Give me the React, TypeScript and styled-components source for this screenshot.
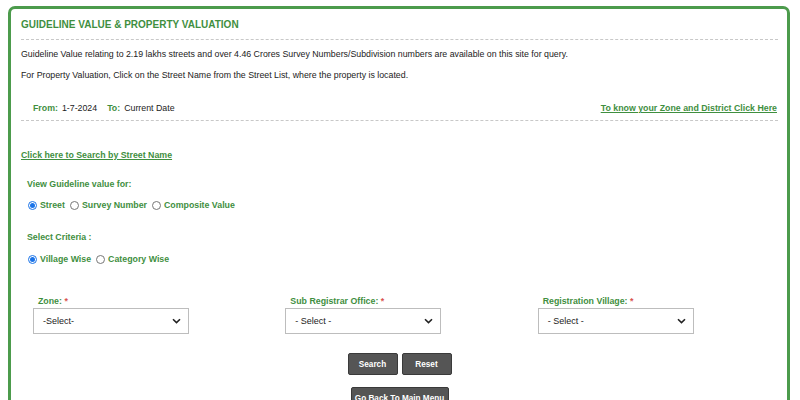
import React from "react";
import styled, { createGlobalStyle } from "styled-components";

const GlobalStyle = createGlobalStyle`
  html, body { margin: 0; padding: 0; background: #fff; }
  body { font-family: "Liberation Sans", Arial, sans-serif; color: #222; }
`;

const green = "#3f8f3f";
const fs = "8.8px";

const Panel = styled.div`
  box-sizing: border-box;
  margin: 6px 0 0 8px;
  width: 782px;
  height: 420px;
  border: 3px solid #4c9b4c;
  border-radius: 7px;
  padding: 0 9px 0 10px;
`;

const Title = styled.h1`
  margin: 0;
  padding: 10px 0 8px;
  font-size: 10px;
  font-weight: bold;
  color: ${green};
  text-transform: uppercase;
  line-height: 12px;
  border-bottom: 1px dashed #c8c8c8;
`;

const Para = styled.p<{ $top: number }>`
  margin: ${(p) => p.$top}px 0 0;
  font-size: ${fs};
  line-height: 11px;
  color: #222;
`;

const DateRow = styled.div`
  display: flex;
  justify-content: space-between;
  align-items: center;
  margin-top: 22px;
  padding: 0 1px 6px 12px;
  border-bottom: 1px dashed #c8c8c8;
  font-size: ${fs};
  line-height: 11px;
`;

const DateInfo = styled.div`
  display: flex;
  gap: 4px;
  align-items: baseline;
`;

const GreenBold = styled.span<{ $gap?: number }>`
  color: ${green};
  font-weight: bold;
  margin-left: ${(p) => p.$gap ?? 0}px;
`;

const Link = styled.a<{ $top?: number }>`
  display: inline-block;
  margin-top: ${(p) => p.$top ?? 0}px;
  color: ${green};
  font-weight: bold;
  font-size: ${fs};
  line-height: 11px;
  text-decoration: underline;
  cursor: pointer;
`;

const Section = styled.div`
  padding-left: 6px;
`;

const Label = styled.div<{ $top: number }>`
  margin-top: ${(p) => p.$top}px;
  color: ${green};
  font-weight: bold;
  font-size: ${fs};
  line-height: 11px;
`;

const RadioRow = styled.div<{ $top: number }>`
  display: flex;
  align-items: center;
  gap: 5px;
  margin-top: ${(p) => p.$top}px;
  padding-left: 1px;
`;

const RadioLabel = styled.label`
  display: flex;
  align-items: center;
  gap: 3px;
  color: ${green};
  font-weight: bold;
  font-size: ${fs};
  line-height: 11px;
`;

const RadioDot = styled.span<{ $on?: boolean }>`
  box-sizing: border-box;
  width: 9px;
  height: 9px;
  border-radius: 50%;
  border: 1px solid ${(p) => (p.$on ? "#1a73e8" : "#777")};
  background: #fff;
  display: inline-flex;
  align-items: center;
  justify-content: center;
  &::after {
    content: "";
    width: 5px;
    height: 5px;
    border-radius: 50%;
    background: ${(p) => (p.$on ? "#1a73e8" : "transparent")};
  }
`;

const Fields = styled.div`
  display: grid;
  grid-template-columns: repeat(3, 1fr);
  margin-top: 31px;
`;

const Field = styled.div`
  padding-left: 12px;
`;

const FieldLabel = styled.div`
  padding-left: 5px;
  color: ${green};
  font-weight: bold;
  font-size: ${fs};
  line-height: 11px;
  margin-bottom: 1px;
`;

const Req = styled.span`
  color: #d9534f;
`;

const SelectBox = styled.div`
  box-sizing: border-box;
  width: 156px;
  height: 26px;
  border: 1px solid #bdbdbd;
  display: flex;
  align-items: center;
  justify-content: space-between;
  padding: 0 7px 0 9px;
  font-size: 9px;
  color: #222;
  background: #fff;
`;

const Buttons = styled.div<{ $top: number }>`
  display: flex;
  justify-content: center;
  gap: 4px;
  margin-top: ${(p) => p.$top}px;
`;

const Btn = styled.button<{ $w: number }>`
  width: ${(p) => p.$w}px;
  height: 22px;
  border: 1px solid #3a3a3a;
  border-radius: 2px;
  background: #555555;
  color: #fff;
  font-family: "Liberation Sans", Arial, sans-serif;
  font-weight: bold;
  font-size: 8.2px;
  padding: 0;
`;

const Chevron = () => (
  <svg width="9" height="6" viewBox="0 0 9 6">
    <path d="M1 1.2 L4.5 4.6 L8 1.2" fill="none" stroke="#222" strokeWidth="1.6" />
  </svg>
);

export default function App() {
  return (
    <>
      <GlobalStyle />
      <Panel>
        <Title>Guideline Value &amp; Property Valuation</Title>
        <Para $top={9}>
          Guideline Value relating to 2.19 lakhs streets and over 4.46 Crores Survey Numbers/Subdivision numbers are available on this site for query.
        </Para>
        <Para $top={10}>
          For Property Valuation, Click on the Street Name from the Street List, where the property is located.
        </Para>
        <DateRow>
          <DateInfo>
            <GreenBold>From:</GreenBold>
            <span>1-7-2024</span>
            <GreenBold $gap={6}>To:</GreenBold>
            <span>Current Date</span>
          </DateInfo>
          <Link>To know your Zone and District Click Here</Link>
        </DateRow>
        <Link $top={29}>Click here to Search by Street Name</Link>
        <Section>
          <Label $top={17}>View Guideline value for:</Label>
          <RadioRow $top={10}>
            <RadioLabel><RadioDot $on />Street</RadioLabel>
            <RadioLabel><RadioDot />Survey Number</RadioLabel>
            <RadioLabel><RadioDot />Composite Value</RadioLabel>
          </RadioRow>
          <Label $top={21}>Select Criteria :</Label>
          <RadioRow $top={11}>
            <RadioLabel><RadioDot $on />Village Wise</RadioLabel>
            <RadioLabel><RadioDot />Category Wise</RadioLabel>
          </RadioRow>
        </Section>
        <Fields>
          <Field>
            <FieldLabel>Zone: <Req>*</Req></FieldLabel>
            <SelectBox>-Select-<Chevron /></SelectBox>
          </Field>
          <Field>
            <FieldLabel>Sub Registrar Office: <Req>*</Req></FieldLabel>
            <SelectBox>- Select -<Chevron /></SelectBox>
          </Field>
          <Field>
            <FieldLabel>Registration Village: <Req>*</Req></FieldLabel>
            <SelectBox>- Select -<Chevron /></SelectBox>
          </Field>
        </Fields>
        <Buttons $top={19}>
          <Btn $w={50}>Search</Btn>
          <Btn $w={50}>Reset</Btn>
        </Buttons>
        <Buttons $top={12}>
          <Btn $w={98}>Go Back To Main Menu</Btn>
        </Buttons>
      </Panel>
    </>
  );
}
